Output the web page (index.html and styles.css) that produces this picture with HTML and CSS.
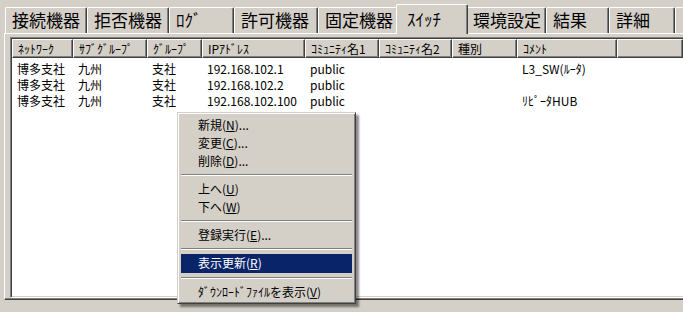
FILE: index.html
```html
<!DOCTYPE html>
<html lang="ja">

<head>
    <meta charset="UTF-8">
    <title>スイッチ</title>
    <link rel="stylesheet" href="styles.css">
</head>

<body>
    <div class="tabs">
        <div class="tab w82">接続機器</div>
        <div class="tab w82">拒否機器</div>
        <div class="tab w65">ﾛｸﾞ</div>
        <div class="tab w84">許可機器</div>
        <div class="tab w80">固定機器</div>
        <div class="tab sel">ｽｲｯﾁ</div>
        <div class="tab w80">環境設定</div>
        <div class="tab w63">結果</div>
        <div class="tab w66">詳細</div>
        <div class="tab w20"></div>
    </div>
    <div class="panel">
        <div class="list">
            <div class="head">
                <div class="hd">ﾈｯﾄﾜｰｸ</div>
                <div class="hd">ｻﾌﾞｸﾞﾙｰﾌﾟ</div>
                <div class="hd">ｸﾞﾙｰﾌﾟ</div>
                <div class="hd">IPｱﾄﾞﾚｽ</div>
                <div class="hd">ｺﾐｭﾆﾃｨ名1</div>
                <div class="hd">ｺﾐｭﾆﾃｨ名2</div>
                <div class="hd">種別</div>
                <div class="hd">ｺﾒﾝﾄ</div>
                <div class="hd"></div>
            </div>
            <div class="rows">
                <div class="row">
                    <span>博多支社</span><span>九州</span><span>支社</span><span>192.168.102.1</span>
                    <span>public</span><span></span><span></span><span>L3_SW(ﾙｰﾀ)</span><span></span>
                </div>
                <div class="row">
                    <span>博多支社</span><span>九州</span><span>支社</span><span>192.168.102.2</span>
                    <span>public</span><span></span><span></span><span></span><span></span>
                </div>
                <div class="row">
                    <span>博多支社</span><span>九州</span><span>支社</span><span>192.168.102.100</span>
                    <span>public</span><span></span><span></span><span>ﾘﾋﾟｰﾀHUB</span><span></span>
                </div>
            </div>
        </div>
    </div>

    <div class="menu">
        <div class="item">新規(<u>N</u>)...</div>
        <div class="item">変更(<u>C</u>)...</div>
        <div class="item">削除(<u>D</u>)...</div>
        <div class="sep"></div>
        <div class="item">上へ(<u>U</u>)</div>
        <div class="item">下へ(<u>W</u>)</div>
        <div class="sep"></div>
        <div class="item">登録実行(<u>E</u>)...</div>
        <div class="sep"></div>
        <div class="item hi">表示更新(<u>R</u>)</div>
        <div class="sep"></div>
        <div class="item">ﾀﾞｳﾝﾛｰﾄﾞﾌｧｲﾙを表示(<u>V</u>)</div>
    </div>
</body>

</html>
```

FILE: styles.css
```css
* {
    margin: 0;
    padding: 0;
    box-sizing: border-box;
}

body {
    background-color: #d4d0c8;
    font-family: "Noto Sans CJK JP", "Liberation Sans", sans-serif;
    color: black;
    width: 683px;
    height: 312px;
    overflow: hidden;
    position: relative;
}

/* tab strip */
.tabs {
    display: flex;
    align-items: flex-end;
    height: 34px;
    padding-left: 5px;
    position: relative;
    z-index: 1;
    overflow: hidden;
}

.tab {
    flex: none;
    height: 26px;
    margin-bottom: 1px;
    padding-left: 6px;
    font-size: 17px;
    line-height: 24px;
    white-space: nowrap;
    border-top: 1px solid white;
    border-left: 1px solid white;
    border-right: 1px solid #404040;
    border-top-left-radius: 2px;
    border-top-right-radius: 2px;
    box-shadow: inset -1px 0 #808080;
}

.w20 { width: 20px; }
.w63 { width: 63px; }
.w65 { width: 65px; }
.w66 { width: 66px; }
.w80 { width: 80px; }
.w82 { width: 82px; }
.w84 { width: 84px; }

.tab.sel {
    width: 72px;
    height: 30px;
    margin: 0 -2px;
    padding-left: 10px;
    line-height: 27px;
    background-color: #d4d0c8;
    position: relative;
}

/* tab page */
.panel {
    margin-left: 4px;
    margin-top: -1px;
    height: 267px;
    border-top: 1px solid white;
    border-left: 1px solid white;
    border-bottom: 1px solid #404040;
    box-shadow: inset 0 -1px #808080;
    padding: 3px 0 1px 5px;
}

.list {
    height: 261px;
    background: white;
    border-top: 1px solid #808080;
    border-left: 1px solid #808080;
    border-bottom: 1px solid white;
    box-shadow: inset 1px 1px #404040, inset 0 -1px #d4d0c8;
    padding: 1px 0 0 1px;
    overflow: hidden;
}

.head,
.row {
    display: grid;
    grid-template-columns: 61px 74px 55px 103px 74px 73px 65px 100px 1fr;
}

.hd {
    height: 19px;
    background: #d4d0c8;
    font-size: 12px;
    line-height: 17px;
    padding-left: 5px;
    white-space: nowrap;
    overflow: hidden;
    border-top: 1px solid white;
    border-left: 1px solid white;
    border-right: 1px solid #404040;
    border-bottom: 1px solid #404040;
    box-shadow: inset -1px -1px #808080;
}

.rows {
    padding-top: 3px;
}

.row {
    height: 16px;
    font-size: 12px;
    line-height: 16px;
    white-space: nowrap;
}

.row span {
    padding-left: 5px;
}

/* context menu */
.menu {
    position: absolute;
    left: 177px;
    top: 112px;
    width: 179px;
    padding: 3px 3px 2px 3px;
    background: #d4d0c8;
    border-top: 1px solid #d4d0c8;
    border-left: 1px solid #d4d0c8;
    border-right: 1px solid #404040;
    border-bottom: 1px solid #404040;
    box-shadow: inset 1px 1px white, inset -1px -1px #808080, 3px 3px 2px rgba(0, 0, 0, 0.45);
    z-index: 2;
}

.item {
    height: 18px;
    line-height: 18px;
    font-size: 12px;
    padding-left: 17px;
    white-space: nowrap;
}

.item.hi {
    background: #0a246a;
    color: white;
    height: 19px;
}

.sep {
    height: 10px;
    display: flex;
    flex-direction: column;
    justify-content: center;
}

.sep::before {
    content: "";
    height: 1px;
    background: #808080;
    border-bottom: 1px solid white;
    box-sizing: content-box;
}
```
